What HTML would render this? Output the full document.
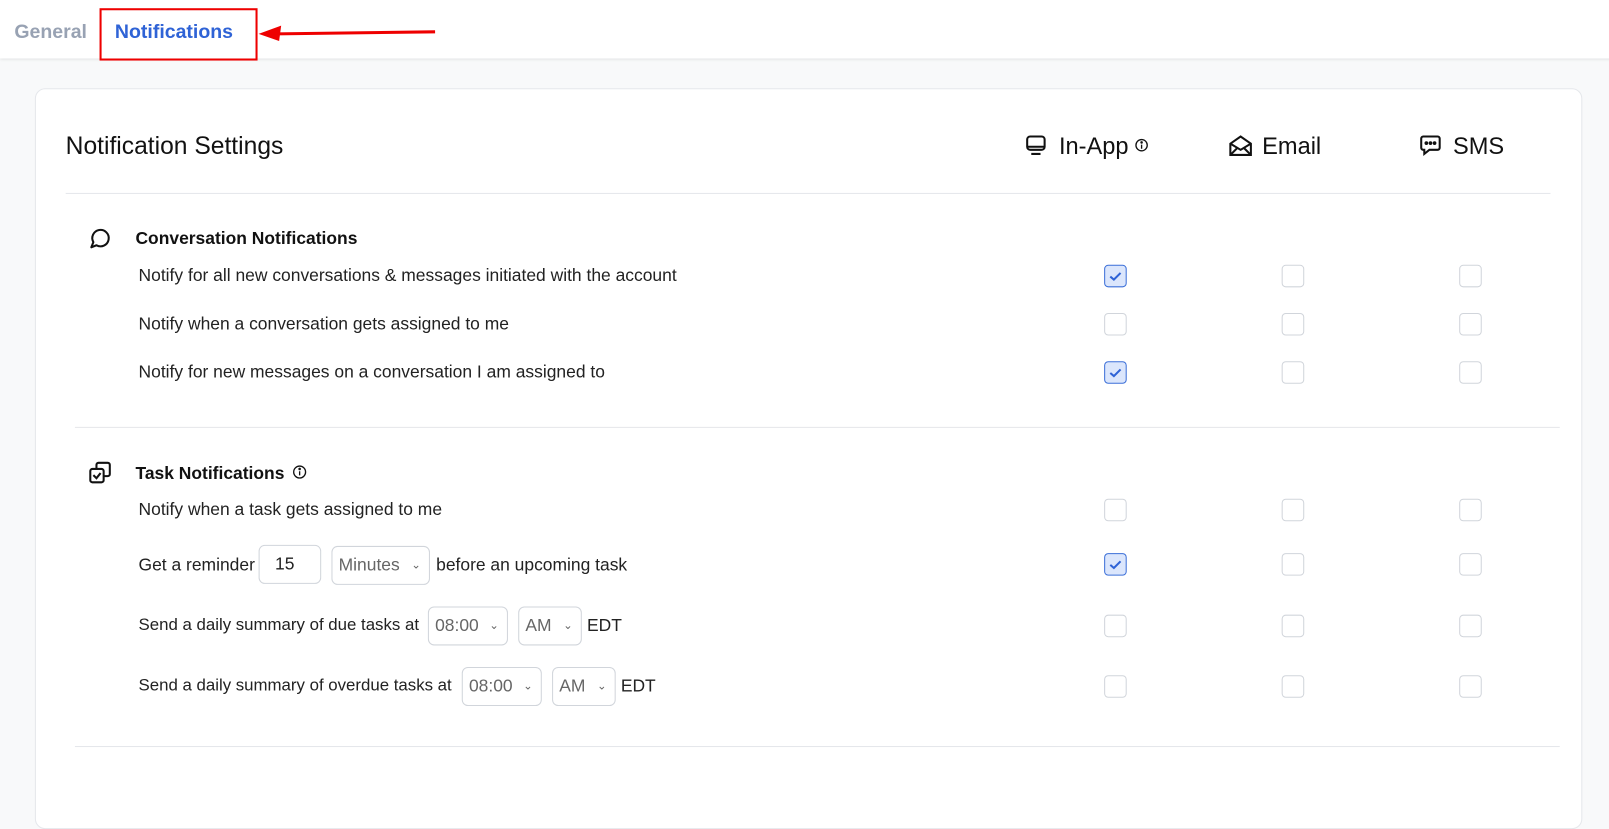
<!DOCTYPE html><html><head><style>
body{margin:0;width:1609px;height:777px;overflow:hidden;background:#f8f9fa;font-family:"Liberation Sans",sans-serif;position:relative;color:#1f2328}
#w{position:absolute;left:0;top:0;width:1568px;height:757px;transform:scale(1.02615);transform-origin:0 0}
.a{position:absolute;white-space:nowrap}
.hdr{position:absolute;left:0;top:0;width:1600px;height:57px;background:#fff;box-shadow:0 1px 3px rgba(0,0,0,.12)}
.card{position:absolute;left:34px;top:86px;width:1506px;height:720px;background:#fff;border:1px solid #e5e7eb;border-radius:10px}
.cb{position:absolute;width:20px;height:20px;border:1px solid #d1d5db;border-radius:4px;background:#fff;box-sizing:border-box}
.cb.on{background:#dbe6fc;border-color:#3b6fd8}
.t{font-size:17px;color:#222}
.sel{position:absolute;height:38px;border:1px solid #d1d5db;border-radius:6px;box-sizing:border-box;font-size:17px;color:#666;line-height:36px;padding-left:6px;background:#fff}
.sel i{position:absolute;right:8px;top:0;font-style:normal;font-size:11px;color:#666}
.hl{position:absolute;height:1px;background:#e5e7eb}
</style></head><body><div id="w">
<div class="hdr"></div>
<div class="a" style="left:14px;top:21px;font-size:19px;font-weight:bold;color:#98a2b3">General</div>
<div class="a" style="left:112px;top:21px;font-size:19px;font-weight:bold;color:#2f63d6">Notifications</div>
<div class="a" style="left:97px;top:8px;width:150px;height:47px;border:2px solid #e00;box-sizing:content-box"></div>
<svg class="a" style="left:250px;top:22px" width="176" height="20"><line x1="20" y1="11" x2="174" y2="9" stroke="#e00" stroke-width="3"/><polygon points="2,11 24,3 22,18" fill="#e00"/></svg>
<div class="card"></div>
<div class="a" style="left:64px;top:129px;font-size:24px;color:#111">Notification Settings</div>
<svg class="a" style="left:999px;top:131px" width="22" height="22" fill="none" stroke="#111" stroke-width="2"><rect x="2" y="2" width="17" height="13" rx="3"/><line x1="2" y1="12" x2="19" y2="12"/><line x1="6" y1="19" x2="15" y2="19"/></svg>
<div class="a" style="left:1032px;top:129px;font-size:23px;color:#111">In-App</div>
<svg class="a" style="left:1106px;top:135px" width="13" height="13" fill="none" stroke="#111" stroke-width="1.3"><circle cx="6.5" cy="6.5" r="5.5"/><line x1="6.5" y1="6" x2="6.5" y2="10"/><circle cx="6.5" cy="3.8" r=".6" fill="#111"/></svg>
<svg class="a" style="left:1197px;top:131px" width="24" height="22" fill="none" stroke="#111" stroke-width="2"><path d="M2 9 L12 2 L22 9 V20 H2 Z"/><path d="M2 9 L12 15 L22 9 M2 20 L9 13 M22 20 L15 13"/></svg>
<div class="a" style="left:1230px;top:129px;font-size:23px;color:#111">Email</div>
<svg class="a" style="left:1383px;top:131px" width="22" height="22" fill="none" stroke="#111" stroke-width="2"><path d="M4 2 H18 a2 2 0 0 1 2 2 V13 a2 2 0 0 1 -2 2 H10 L5 19 V15 H4 a2 2 0 0 1 -2 -2 V4 a2 2 0 0 1 2 -2Z"/><circle cx="7" cy="8.5" r=".8" fill="#111"/><circle cx="11" cy="8.5" r=".8" fill="#111"/><circle cx="15" cy="8.5" r=".8" fill="#111"/></svg>
<div class="a" style="left:1416px;top:129px;font-size:23px;color:#111">SMS</div>
<div class="hl" style="left:64px;top:188px;width:1447px"></div>
<svg class="a" style="left:86px;top:222px" width="22" height="22" fill="none" stroke="#111" stroke-width="2"><path d="M3 19 L5 14 A8 8 0 1 1 8 17 Z" stroke-linejoin="round"/></svg>
<div class="a" style="left:132px;top:223px;font-size:17px;font-weight:bold;color:#111">Conversation Notifications</div>
<div class="a t" style="left:135px;top:259px">Notify for all new conversations &amp; messages initiated with the account</div>
<div class="a t" style="left:135px;top:306px">Notify when a conversation gets assigned to me</div>
<div class="a t" style="left:135px;top:353px">Notify for new messages on a conversation I am assigned to</div>
<div class="hl" style="left:73px;top:416px;width:1447px"></div>
<svg class="a" style="left:86px;top:449px" width="24" height="24" fill="none" stroke="#111" stroke-width="2"><rect x="2" y="8" width="13" height="13" rx="2"/><path d="M8 8 V4 a2 2 0 0 1 2-2 H19 a2 2 0 0 1 2 2 V13 a2 2 0 0 1 -2 2 H15"/><path d="M5 14 L8 17 L12 12"/></svg>
<div class="a" style="left:132px;top:452px;font-size:17px;font-weight:bold;color:#111">Task Notifications</div>
<svg class="a" style="left:285px;top:453px" width="14" height="14" fill="none" stroke="#111" stroke-width="1.3"><circle cx="7" cy="7" r="5.8"/><line x1="7" y1="6.3" x2="7" y2="10.3"/><circle cx="7" cy="4" r=".6" fill="#111"/></svg>
<div class="a t" style="left:135px;top:487px">Notify when a task gets assigned to me</div>
<div class="a t" style="left:135px;top:541px">Get a reminder</div>
<div class="sel" style="left:252px;top:531px;width:61px;color:#222;padding-left:15px">15</div>
<div class="sel" style="left:323px;top:532px;width:96px">Minutes<i>&#8964;</i></div>
<div class="a t" style="left:425px;top:541px">before an upcoming task</div>
<div class="a t" style="left:135px;top:600px;font-size:16.4px">Send a daily summary of due tasks at</div>
<div class="sel" style="left:417px;top:591px;width:78px">08:00<i>&#8964;</i></div>
<div class="sel" style="left:505px;top:591px;width:62px">AM<i>&#8964;</i></div>
<div class="a t" style="left:572px;top:600px">EDT</div>
<div class="a t" style="left:135px;top:659px;font-size:16.4px">Send a daily summary of overdue tasks at</div>
<div class="sel" style="left:450px;top:650px;width:78px">08:00<i>&#8964;</i></div>
<div class="sel" style="left:538px;top:650px;width:62px">AM<i>&#8964;</i></div>
<div class="a t" style="left:605px;top:659px">EDT</div>
<div class="hl" style="left:73px;top:727px;width:1447px"></div>
<div id="cbs"></div>
</div>
<script>
var ys=[269,316,363,497,550,610,669],xs=[1087,1260,1433],on={"0-0":1,"2-0":1,"4-0":1},h="";
ys.forEach(function(y,i){xs.forEach(function(x,j){var o=on[i+"-"+j];h+='<div class="cb'+(o?' on':'')+'" style="left:'+(x-11)+'px;top:'+(y-11)+'px;width:22px;height:22px">'+(o?'<svg width="20" height="20" style="position:absolute;left:0;top:0"><path d="M5 10.5 L8.5 13.5 L15 7" fill="none" stroke="#2f63d6" stroke-width="2"/></svg>':'')+'</div>';});});
document.getElementById("cbs").innerHTML=h;
</script>
</body></html>
